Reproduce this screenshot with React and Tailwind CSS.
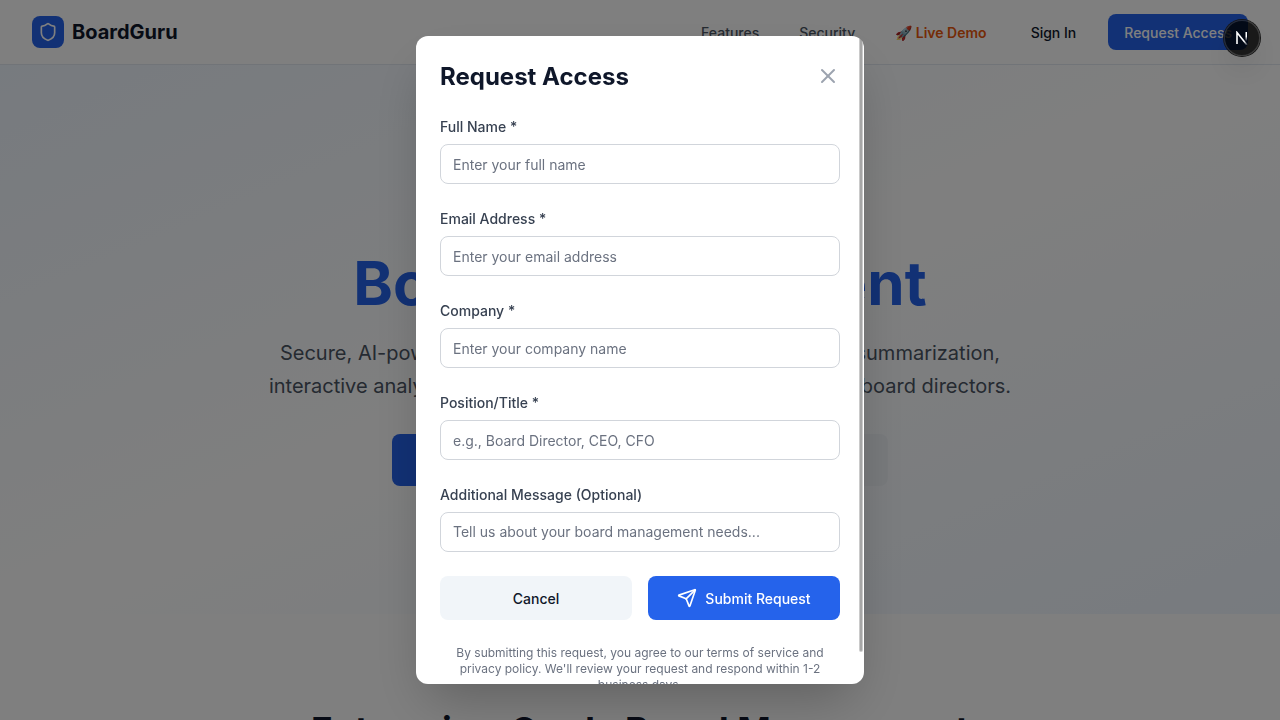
import { Shield, X, Send } from "lucide-react";

const fields = [
  { id: "name", label: "Full Name *", placeholder: "Enter your full name", type: "text" },
  { id: "email", label: "Email Address *", placeholder: "Enter your email address", type: "email" },
  { id: "company", label: "Company *", placeholder: "Enter your company name", type: "text" },
  { id: "position", label: "Position/Title *", placeholder: "e.g., Board Director, CEO, CFO", type: "text" },
];

function Header() {
  return (
    <header className="border-b border-[#e2e8f0] bg-white">
      <div className="flex h-16 items-center justify-between px-8">
        <a href="#home" className="flex items-center gap-2">
          <span className="flex size-8 items-center justify-center rounded-lg bg-[#2563eb] text-white">
            <Shield size={20} />
          </span>
          <span className="text-xl font-bold text-[#0f172a]">BoardGuru</span>
        </a>
        <nav className="flex items-center text-sm font-medium">
          <a href="#features" className="mr-10 pt-0.5 text-[#4b5563]">Features</a>
          <a href="#security" className="mr-10 pt-0.5 text-[#4b5563]">Security</a>
          <a href="#demo" className="mr-7 pt-0.5 font-semibold text-[#ea580c]">🚀 Live Demo</a>
          <button className="mr-4 h-9 px-4 pt-0.5 text-[#0f172a]">Sign In</button>
          <button className="h-9 rounded-lg bg-[#2563eb] px-4 pt-0.5 text-white">Request Access</button>
        </nav>
      </div>
    </header>
  );
}

function Hero() {
  return (
    <section className="bg-linear-to-br from-[#eff6ff] via-white to-[#eff6ff] px-8 py-32 text-center">
      <h1 className="mb-6 text-6xl leading-none font-bold text-[#0f172a]">
        The Future of
        <span className="block text-[#2563eb]">Board Management</span>
      </h1>
      <p className="mx-auto mb-8 max-w-3xl text-xl leading-relaxed text-[#4b5563]">
        Secure, AI-powered board management featuring document summarization,
        <br />
        interactive analysis, and enterprise-grade security for modern board directors.
      </p>
      <div className="flex justify-center gap-4">
        <button className="h-13 w-60 rounded-lg bg-[#2563eb] font-medium text-white">Request Access</button>
        <button className="h-13 w-60 rounded-lg bg-[#f1f5f9] font-medium text-[#0f172a]">Learn More</button>
      </div>
    </section>
  );
}

function RequestDialog() {
  return (
    <div className="fixed inset-0 z-10 flex items-center justify-center bg-black/50 p-4">
      <div role="dialog" aria-modal="true" aria-labelledby="dialog-title" className="relative w-full max-w-md overflow-hidden rounded-xl bg-white shadow-2xl">
        <div className="max-h-[90vh] overflow-y-auto p-6 [scrollbar-width:none]">
          <div className="mb-[22px] flex items-start justify-between">
            <h2 id="dialog-title" className="text-2xl leading-[34px] font-bold text-[#0f172a]">Request Access</h2>
            <button aria-label="Close" className="flex h-8 w-6 items-center justify-center text-[#9ca3af]">
              <X size={24} />
            </button>
          </div>
          <form className="flex flex-col gap-6">
            {fields.map((f) => (
              <div key={f.id} className="flex flex-col gap-1.5">
                <label htmlFor={f.id} className="text-sm leading-[22px] font-medium text-[#374151]">{f.label}</label>
                <input id={f.id} type={f.type} placeholder={f.placeholder} className="h-10 w-full rounded-lg border border-[#d1d5db] px-3 text-sm placeholder:text-[#6b7280]" />
              </div>
            ))}
            <div className="flex flex-col gap-1.5">
              <label htmlFor="message" className="text-sm leading-[22px] font-medium text-[#374151]">Additional Message (Optional)</label>
              <textarea id="message" rows="1" placeholder="Tell us about your board management needs..." className="h-10 w-full resize-none rounded-lg border border-[#d1d5db] px-3 py-2 text-sm leading-[22px] placeholder:text-[#6b7280]" />
            </div>
            <div className="grid grid-cols-2 gap-4">
              <button type="button" className="flex h-11 items-center justify-center rounded-lg bg-[#f1f5f9] text-sm font-medium text-[#0f172a]">
                <span className="pt-0.5">Cancel</span>
              </button>
              <button type="submit" className="flex h-11 items-center justify-center gap-2 rounded-lg bg-[#2563eb] text-sm font-medium text-white">
                <Send size={20} />
                <span className="pt-0.5">Submit Request</span>
              </button>
            </div>
          </form>
          <p className="mt-[25px] text-center text-xs text-[#6b7280]">
            By submitting this request, you agree to our terms of service and privacy policy. We'll review your request and respond within 1-2 business days.
          </p>
        </div>
        <div aria-hidden="true" className="absolute top-0 right-px h-[95%] w-1 rounded-full border border-white/40 bg-black/35" />
      </div>
    </div>
  );
}

function DevBadge() {
  return (
    <button
      aria-label="Open developer tools"
      className="fixed top-5 right-5 z-20 flex size-9 items-center justify-center rounded-full bg-black/80 shadow-[0_0_0_1px_#171717,inset_0_0_0_1px_rgba(255,255,255,0.14),0_16px_32px_-8px_rgba(0,0,0,0.24)]"
    >
      <svg width="14" height="14" viewBox="0 0 14 14" fill="none" strokeWidth="1.6">
        <defs>
          <linearGradient id="stem" x1="0" y1="1" x2="0" y2="10" gradientUnits="userSpaceOnUse">
            <stop offset="0.5" stopColor="white" />
            <stop offset="1" stopColor="white" stopOpacity="0" />
          </linearGradient>
          <linearGradient id="slash" x1="2" y1="1" x2="12" y2="14" gradientUnits="userSpaceOnUse">
            <stop offset="0.7" stopColor="white" />
            <stop offset="1" stopColor="white" stopOpacity="0.2" />
          </linearGradient>
        </defs>
        <path d="M2 13V1.5L12 14" stroke="url(#slash)" />
        <rect x="10.5" y="1" width="1.5" height="9.5" fill="url(#stem)" />
      </svg>
    </button>
  );
}

export default function App() {
  return (
    <div className="h-screen overflow-hidden bg-white font-['Inter',sans-serif]">
      <Header />
      <Hero />
      <section className="px-8 py-24 text-center">
        <h2 className="text-4xl font-bold text-[#0f172a]">Enterprise-Grade Board Management</h2>
      </section>
      <DevBadge />
      <RequestDialog />
    </div>
  );
}
